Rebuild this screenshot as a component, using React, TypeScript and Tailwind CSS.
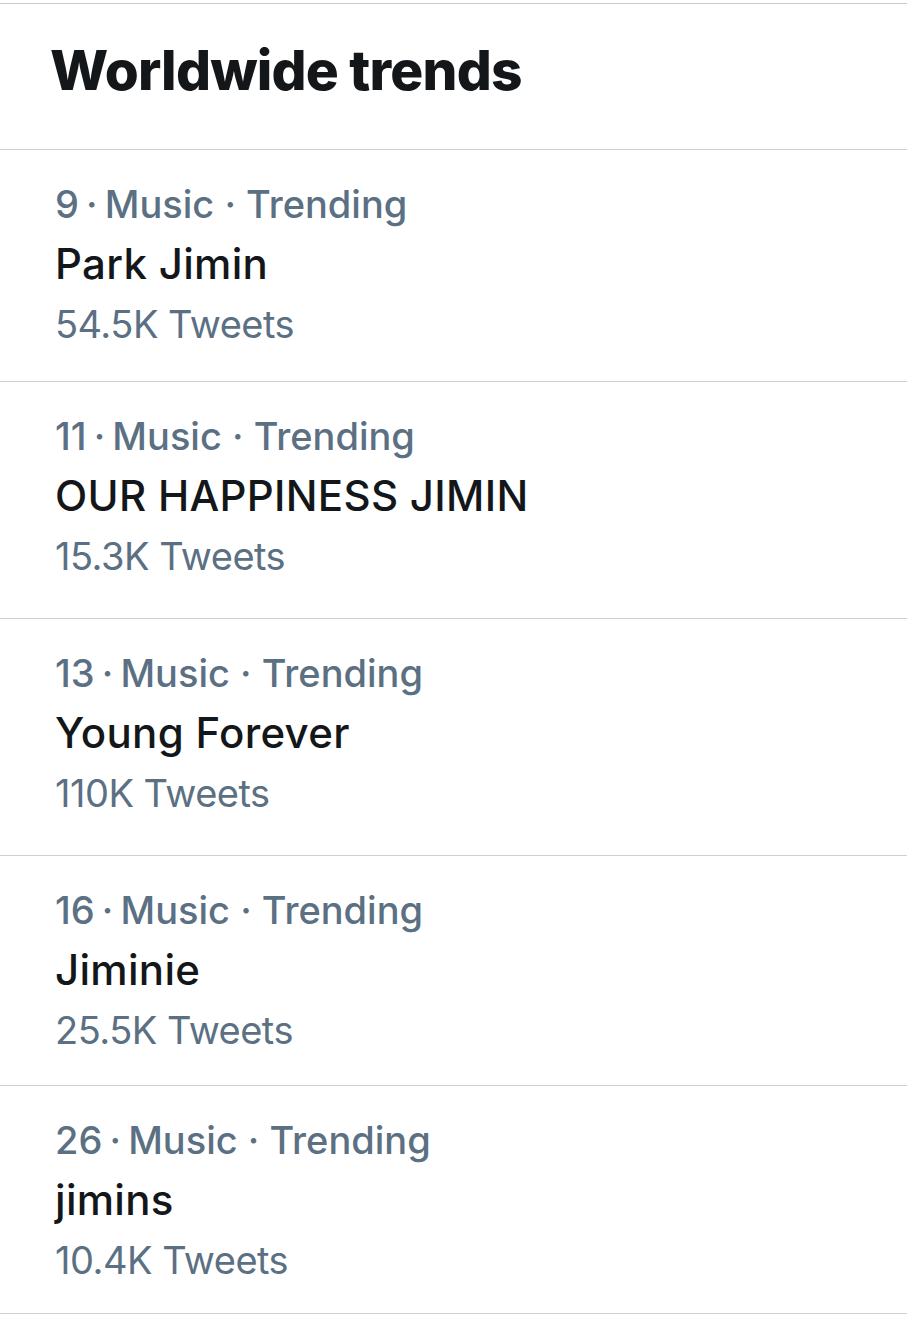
const trends = [
  { rank: 9, name: "Park Jimin", count: "54.5K", h: "h-[232px]" },
  { rank: 11, name: "OUR HAPPINESS JIMIN", count: "15.3K", h: "h-[237px]" },
  { rank: 13, name: "Young Forever", count: "110K", h: "h-[237px]" },
  { rank: 16, name: "Jiminie", count: "25.5K", h: "h-[230px]" },
  { rank: 26, name: "jimins", count: "10.4K", h: "h-[229px]" },
];

export default function App() {
  return (
    <div className="w-[907px] h-[1319px] bg-white pt-[3px] font-['Inter',sans-serif] overflow-hidden">
      <div className="h-[146px] border-t border-[#c9c9c9] pl-[50px] pt-[39px]">
        <h1 className="text-[55px] leading-none font-extrabold tracking-[-0.8px] text-[#14171a]">
          Worldwide trends
        </h1>
      </div>
      {trends.map((t, i) => (
        <div
          key={t.rank}
          className={`${t.h} border-t border-[#d0d0d4] pl-[55px] pt-[24px] ${
            i === trends.length - 1 ? "border-b" : ""
          }`}
        >
          <div className="text-[38px] leading-[60px] font-medium text-[#5b7083]">
            {t.rank}
            <span className="[word-spacing:-3px]"> · </span>
            Music · Trending
          </div>
          <div className="text-[42px] leading-[60px] font-medium tracking-[0.3px] text-[#14171a]">
            {t.name}
          </div>
          <div className="text-[38px] leading-[60px] tracking-[-0.5px] text-[#5b7083]">
            {t.count} Tweets
          </div>
        </div>
      ))}
    </div>
  );
}
